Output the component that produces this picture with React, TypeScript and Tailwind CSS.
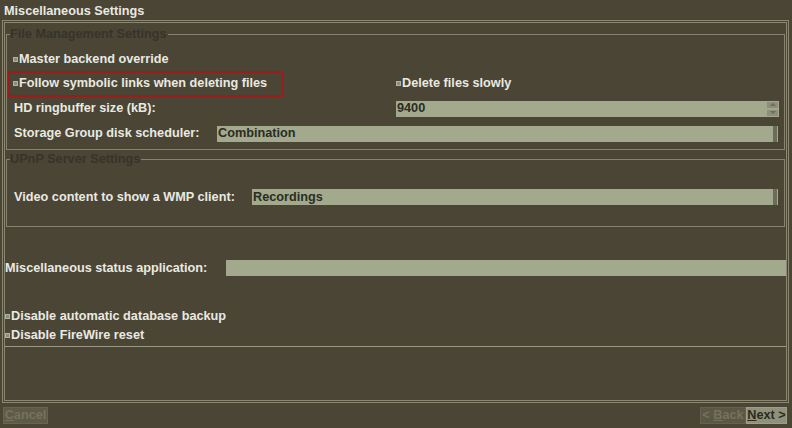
import React from 'react';

const font = { fontFamily: '"Liberation Sans", Arial, sans-serif' };

const Check = ({ label }: { label: string }) => (
    <div className="flex items-center">
        <span className="w-[5px] h-[5px] border border-[#b3b3a3] bg-[#8c8c7c] mr-[1px]" />
        <span>{label}</span>
    </div>
);

const Field = ({ value, width, spin, bar }: { value?: string; width: string; spin?: boolean; bar?: boolean }) => (
    <div className={`relative h-[16px] bg-[#a2a98c] text-[#2c2c22] flex items-center pl-[1px] ${width}`}>
        <span>{value}</span>
        {spin && (
            <div className="absolute right-0 top-0 h-[16px] w-[13px] flex flex-col bg-[#8d8f79]">
                <div className="flex-1 border border-[#a4a690] flex items-center justify-center">
                    <div className="w-0 h-0 border-l-[3px] border-r-[3px] border-b-[3px] border-l-transparent border-r-transparent border-b-[#6c6d5a]" />
                </div>
                <div className="flex-1 border border-[#a4a690] flex items-center justify-center">
                    <div className="w-0 h-0 border-l-[3px] border-r-[3px] border-t-[3px] border-l-transparent border-r-transparent border-t-[#6c6d5a]" />
                </div>
            </div>
        )}
        {bar && <div className="absolute right-[1px] top-0 h-[16px] w-[4px] bg-[#6b6c59]" />}
    </div>
);

export default function App() {
    return (
        <div
            className="w-[792px] h-[428px] bg-[#4a4535] text-[#e9e9e1] text-[12.7px] font-bold leading-[15px] flex flex-col overflow-hidden"
            style={font}
        >
            {/* Title */}
            <div className="h-[20px] flex items-center pl-[4px] pt-[2px]">Miscellaneous Settings</div>

            {/* Outer frame */}
            <div className="ml-[2px] mr-[3px] h-[383px] border-[3px] border-double border-[#8a8873] flex flex-col">
                {/* File Management */}
                <fieldset className="mt-[4px] mx-[1px] border border-[#858270] pb-[3px]">
                    <legend className="ml-[3px] pr-[1px] text-[#37332a]">File Management Settings</legend>
                    <div className="mt-[4px] flex flex-col">
                        <div className="h-[25px] flex items-center pl-[6px] pt-[1px]">
                            <Check label="Master backend override" />
                        </div>
                        <div className="h-[25px] flex items-center">
                            <div className="ml-[1px] w-[276px] h-[26px] border-2 border-[#9c1c1c] flex items-center pl-[3px]">
                                <Check label="Follow symbolic links when deleting files" />
                            </div>
                            <div className="ml-[112px]">
                                <Check label="Delete files slowly" />
                            </div>
                        </div>
                        <div className="h-[25px] flex items-center">
                            <div className="w-[389px] pl-[7px]">HD ringbuffer size (kB):</div>
                            <Field value="9400" width="w-[383px]" spin />
                        </div>
                        <div className="h-[25px] flex items-center">
                            <div className="w-[210px] pl-[7px]">Storage Group disk scheduler:</div>
                            <Field value="Combination" width="w-[561px]" bar />
                        </div>
                    </div>
                </fieldset>

                {/* UPnP */}
                <fieldset className="mt-[2px] mx-[1px] border border-[#858270]">
                    <legend className="ml-[3px] pr-[1px] text-[#37332a]">UPnP Server Settings</legend>
                    <div className="h-[59px] flex items-center pt-[1px]">
                        <div className="w-[245px] pl-[7px]">Video content to show a WMP client:</div>
                        <Field value="Recordings" width="w-[526px]" bar />
                    </div>
                </fieldset>

                <div className="mt-[31px] h-[20px] flex items-center">
                    <div className="w-[221px]">Miscellaneous status application:</div>
                    <Field width="w-[560px]" />
                </div>

                <div className="mt-[29px] flex flex-col">
                    <div className="h-[19px] flex items-center">
                        <Check label="Disable automatic database backup" />
                    </div>
                    <div className="h-[19px] flex items-center">
                        <Check label="Disable FireWire reset" />
                    </div>
                </div>

                <div className="mt-[1px] border-t border-[#9c9a84]" />
            </div>

            {/* Buttons */}
            <div className="mt-[4px] flex items-center">
                <div className="ml-[3px] w-[45px] h-[17px] bg-[#5d5a47] border border-[#67644f] text-[#75725d] flex items-center justify-center">
                    <span><span className="underline">C</span>ancel</span>
                </div>
                <div className="flex-1" />
                <div className="w-[46px] h-[17px] bg-[#5a5745] border border-[#64614d] text-[#75725d] flex items-center justify-center">
                    <span>&lt; <span className="underline">B</span>ack</span>
                </div>
                <div className="mr-[5px] w-[41px] h-[17px] bg-[#8f917a] border border-[#9c9e86] text-[#2b2b20] flex items-center justify-center">
                    <span><span className="underline">N</span>ext &gt;</span>
                </div>
            </div>
        </div>
    );
}
